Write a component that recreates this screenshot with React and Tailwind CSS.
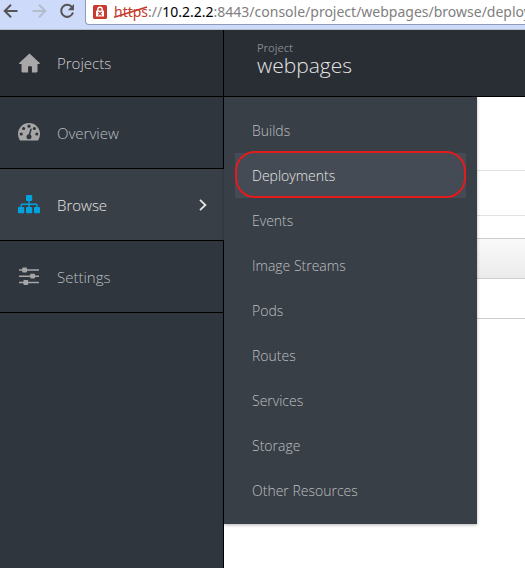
import React from "react";

function HomeIcon() {
  return (
    <svg viewBox="0 0 22 20" className="h-5 w-[22px]" fill="currentColor" aria-hidden="true">
      <path d="M11.5 0.5 22 10.2 21.3 11H19.5V18.3Q19.5 19.4 18.4 19.4H13.9V14Q13.9 13.2 13.1 13.2H10.9Q10.1 13.2 10.1 14V19.4H4.6Q3.5 19.4 3.5 18.3V11H1.6L.9 10.2Z" />
    </svg>
  );
}

function GaugeIcon() {
  return (
    <svg viewBox="0 0 22 20" className="h-5 w-[22px]" aria-hidden="true">
      <path
        d="M11 0A11 11 0 0 0 0 11Q0 14.2 1.7 17Q2 17.6 2.7 17.6H19.3Q20 17.6 20.3 17Q22 14.2 22 11A11 11 0 0 0 11 0Z"
        fill="currentColor"
      />
      <g fill="#30363d">
        <circle cx="3.2" cy="11" r="1.6" />
        <circle cx="5.6" cy="5.5" r="1.6" />
        <circle cx="11" cy="3.2" r="1.6" />
        <circle cx="16.4" cy="5.5" r="1.6" />
        <circle cx="18.8" cy="11" r="1.6" />
        <circle cx="11" cy="13.7" r="2.5" />
      </g>
      <path d="M11.2 12.5 13 6.3" stroke="#30363d" strokeWidth="1.5" strokeLinecap="round" />
    </svg>
  );
}

function SitemapIcon() {
  return (
    <svg viewBox="0 0 22 20" className="h-5 w-[22px]" fill="currentColor" aria-hidden="true">
      <rect x="8" y="0" width="6.2" height="6" rx="1" />
      <rect x="0" y="12" width="6.2" height="6.3" rx="1" />
      <rect x="8" y="12" width="6.2" height="6.3" rx="1" />
      <rect x="16" y="12" width="6" height="6.3" rx="1" />
      <path
        d="M11.1 5.5V13M3.1 13V10.2Q3.1 9.2 4.1 9.2H18Q19 9.2 19 10.2V13"
        fill="none"
        stroke="currentColor"
        strokeWidth="1.4"
      />
    </svg>
  );
}

function SlidersIcon() {
  return (
    <svg viewBox="0 0 22 20" className="h-5 w-[22px]" fill="currentColor" aria-hidden="true">
      <path d="M1 3H21M1 9.2H21M1 15.5H21" stroke="currentColor" strokeWidth="1.4" />
      <rect x="4.2" y="0.6" width="4.8" height="4.8" rx="0.8" />
      <rect x="12.2" y="6.8" width="4.8" height="4.8" rx="0.8" />
      <rect x="5.4" y="13.1" width="4.8" height="4.8" rx="0.8" />
    </svg>
  );
}

function BackIcon() {
  return (
    <svg viewBox="0 0 16 16" className="size-4" fill="none" stroke="currentColor" strokeWidth="2" aria-hidden="true">
      <path d="M14.5 8H2.5M8 1.7 1.7 8 8 14.3" />
    </svg>
  );
}

function ForwardIcon() {
  return (
    <svg viewBox="0 0 16 16" className="size-4" fill="none" stroke="currentColor" strokeWidth="2" aria-hidden="true">
      <path d="M1.5 8H13.5M8 1.7 14.3 8 8 14.3" />
    </svg>
  );
}

function ReloadIcon() {
  return (
    <svg viewBox="0 0 16 16" className="size-4" aria-hidden="true">
      <path d="M13 4.2A6 6 0 1 0 14 9.5" fill="none" stroke="currentColor" strokeWidth="2" />
      <path d="M15 1V7.2H8.8Z" fill="currentColor" />
    </svg>
  );
}

function InsecureIcon() {
  return (
    <svg viewBox="0 0 14 14" className="size-3.5 shrink-0" aria-hidden="true">
      <rect width="14" height="14" rx="1.5" fill="#c93a2c" />
      <path d="M4.8 6V4.4A2.2 2.2 0 0 1 9.2 4.4V6" fill="none" stroke="#fff" strokeWidth="1.4" />
      <rect x="3" y="5.6" width="8" height="6" rx="0.6" fill="#fff" />
      <path d="M5.3 7 8.7 10.4M8.7 7 5.3 10.4" stroke="#c93a2c" strokeWidth="1.2" />
    </svg>
  );
}

const navItems = [
  { label: "Overview", Icon: GaugeIcon },
  { label: "Browse", Icon: SitemapIcon, active: true },
  { label: "Settings", Icon: SlidersIcon },
];

const menuItems = [
  "Builds",
  "Deployments",
  "Events",
  "Image Streams",
  "Pods",
  "Routes",
  "Services",
  "Storage",
  "Other Resources",
];

function BrowserBar() {
  return (
    <div className="flex h-[30px] shrink-0 items-start overflow-hidden border-b border-[#b3bccb] bg-[#cedaf9] pl-[3px]">
      <div className="flex h-[22px] w-[82px] shrink-0 items-center gap-3 text-[#555]">
        <button type="button" aria-label="Back"><BackIcon /></button>
        <button type="button" aria-label="Forward" disabled className="text-[#b3bccd]"><ForwardIcon /></button>
        <button type="button" aria-label="Reload"><ReloadIcon /></button>
      </div>
      <label className="flex h-[25px] min-w-0 flex-1 items-center rounded-bl border-b border-l border-[#8f9bb8] bg-white pb-px pl-[7px] font-['Noto_Sans','Open_Sans',sans-serif] text-sm font-normal text-[#808080]">
        <InsecureIcon />
        <span className="relative ml-[7px] text-[#c5392b]">
          https
          <svg viewBox="0 0 34 12" className="absolute top-1 left-0 h-3 w-[34px]" aria-hidden="true">
            <path d="M0 11.3 33 1" stroke="#c5392b" strokeWidth="1.6" />
          </svg>
        </span>
        <span>://</span>
        <span className="text-black">10.2.2.2</span>
        <input
          type="text"
          aria-label="Address"
          className="min-w-0 flex-1 bg-transparent outline-none"
          defaultValue=":8443/console/project/webpages/browse/deployments"
        />
      </label>
    </div>
  );
}

function BrowseMenu() {
  return (
    <ul className="absolute top-0 left-0 z-10 w-[253px] bg-[#393f46] p-[11px] shadow-[0_1px_3px_rgba(0,0,0,0.3)]">
      {menuItems.map((item) => {
        const selected = item === "Deployments";
        return (
          <li key={item} className="relative">
            <a
              href="#"
              className={
                selected
                  ? "flex h-[45px] items-center bg-[#444b54] px-[17px] text-[#e6e6e6]"
                  : "flex h-[45px] items-center px-[17px] text-[#bdbfc1]"
              }
            >
              {item}
            </a>
            {selected && (
              <span className="pointer-events-none absolute inset-x-0 -top-0.5 bottom-0 rounded-[20px] border-2 border-[#e31b1f]" />
            )}
          </li>
        );
      })}
    </ul>
  );
}

export default function App() {
  return (
    <div className="flex h-screen flex-col overflow-hidden bg-white font-['Open_Sans','Noto_Sans',sans-serif] text-sm font-light">
      <BrowserBar />
      <header className="flex h-[67px] shrink-0 border-b border-black bg-[#292d34]">
        <a href="#" className="flex w-56 shrink-0 items-center gap-[17px] border-r border-black pl-[18px] text-[15px] text-[#d0d0d0]">
          <span className="text-[#a8a8a8]"><HomeIcon /></span>
          <span className="pt-0.5">Projects</span>
        </a>
        <div className="flex flex-col pt-3 pl-[33px]">
          <span className="text-[11px] leading-3 font-normal text-[#85888c]">Project</span>
          <h1 className="text-[21px] leading-[22px] text-[#e4e4e4]">webpages</h1>
        </div>
      </header>
      <div className="flex min-h-0 flex-1">
        <nav className="flex w-56 shrink-0 flex-col bg-[#30363d] text-[15px]">
          {navItems.map(({ label, Icon, active }) => (
            <a
              key={label}
              href="#"
              className={
                active
                  ? "flex h-[72px] items-center gap-[17px] border-b border-black bg-[#393f46] pr-[17px] pl-[18px] text-[#e6e6e6]"
                  : "flex h-[72px] items-center gap-[17px] border-r border-b border-black pl-[18px] text-[#bcbfc2]"
              }
            >
              <span className={active ? "text-[#00a3df]" : "text-[#a6a6a6]"}><Icon /></span>
              <span className="pt-0.5">{label}</span>
              {active && (
                <svg viewBox="0 0 8 14" className="ml-auto h-3.5 w-2" fill="none" stroke="currentColor" strokeWidth="1.8" aria-hidden="true">
                  <path d="M1 1.8 6.4 7 1 12.2" />
                </svg>
              )}
            </a>
          ))}
          <div className="flex-1 border-r border-black" />
        </nav>
        <main className="relative flex-1">
          <BrowseMenu />
          <div className="h-[74px] border-b border-[#e2e2e2]" />
          <div className="h-[45px] border-b border-[#e2e2e2]" />
          <div className="h-[23px] border-b border-[#cecece]" />
          <div className="h-10 border-b border-[#cecece] bg-linear-to-b from-[#fafafa] to-[#ebebeb]" />
          <div className="h-10 border-b border-[#cecece]" />
        </main>
      </div>
    </div>
  );
}
